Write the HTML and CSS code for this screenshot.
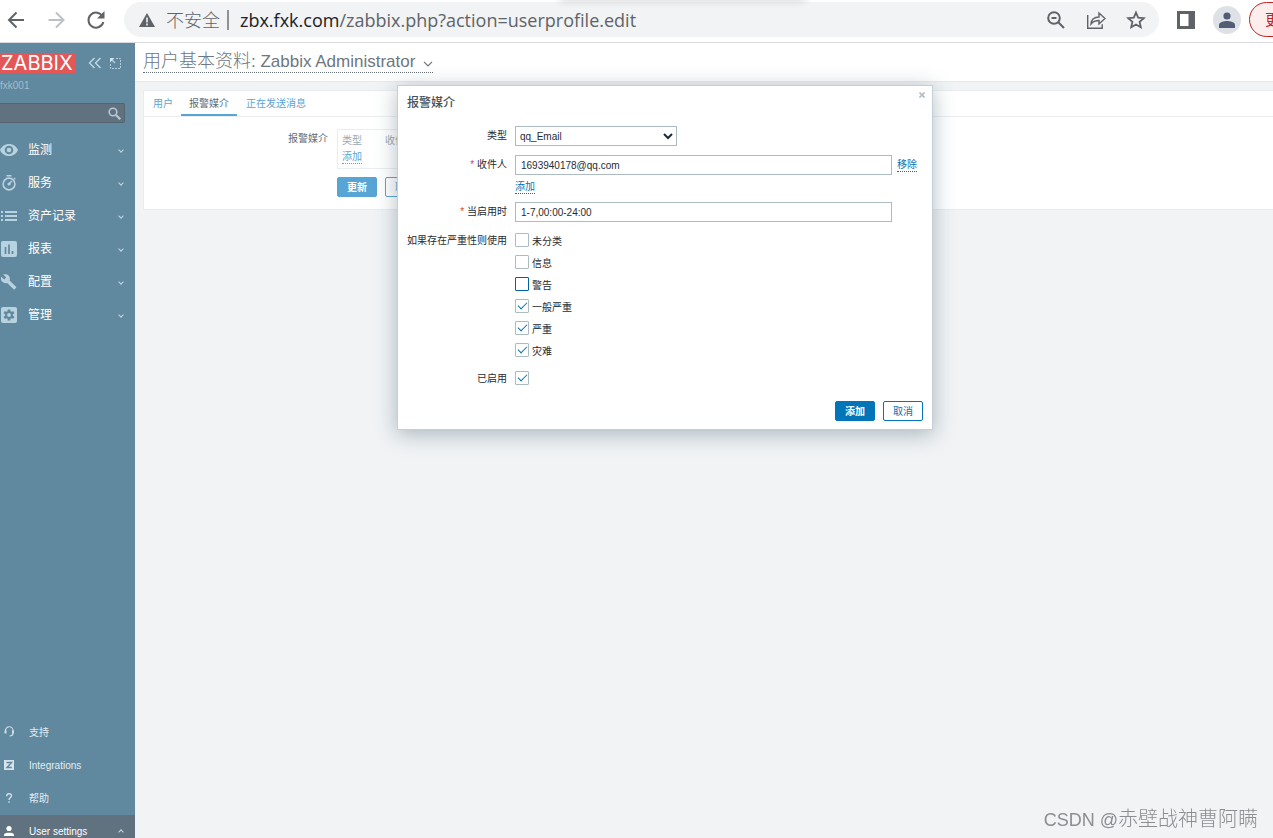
FILE: index.html
```html
<!DOCTYPE html>
<html lang="zh-CN">
<head>
<meta charset="utf-8">
<title>用户基本资料</title>
<link rel="stylesheet" href="styles.css">
</head>
<body>
<header class="browser">
  <button class="nav-btn" aria-label="Back"><svg width="20" height="20" viewBox="0 0 20 20" fill="none" stroke="#5f6368" stroke-width="2"><path d="M18 10H4M10.500 2.500L3 10l7.500 7.500"/></svg></button>
  <button class="nav-btn" aria-label="Forward"><svg width="20" height="20" viewBox="0 0 20 20" fill="none" stroke="#bdc1c6" stroke-width="2"><path d="M2.500 10H16.500M10 2.500l7.500 7.500-7.500 7.500"/></svg></button>
  <button class="nav-btn" aria-label="Reload"><svg width="20" height="20" viewBox="0 0 20 20" fill="none" stroke="#5f6368" stroke-width="2"><path d="M16.600 6.500A7.500 7.500 0 1 0 17.300 12"/><path d="M18.500 1v7.500H11z" fill="#5f6368" stroke="none"/></svg></button>
  <div class="omnibox">
    <svg width="16" height="16" viewBox="0 0 16 16"><path d="M8 1L16 15H0z" fill="#5f6368"/><path d="M8 5.500v5M8 11.500v2" stroke="#f1f3f4" stroke-width="1.600"/></svg>
    <span class="insecure">不安全</span>
    <span class="url"><b>zbx.fxk.com</b>/zabbix.php?action=userprofile.edit</span>
    <div class="omni-actions">
      <button class="icon-btn" aria-label="Zoom"><svg width="20" height="20" viewBox="0 0 20 20" fill="none" stroke="#5f6368" stroke-width="2"><circle cx="8" cy="8" r="5.800"/><path d="M12 12l6 6M5.500 8h5"/></svg></button>
      <button class="icon-btn" aria-label="Share"><svg width="20" height="20" viewBox="0 0 20 20" fill="none" stroke="#5f6368" stroke-width="1.400"><path d="M1.700 5v13.200h14.500v-4"/><path d="M5 14c.5-5 3.500-7 8-7V3l6 5.500-6 5.500v-3.500c-4 0-6 1-8 3.500z"/></svg></button>
      <button class="icon-btn" aria-label="Bookmark"><svg width="20" height="20" viewBox="0 0 20 20" fill="none" stroke="#5f6368" stroke-width="1.800"><path d="M10 2.600l2.200 5.100 5.600.5-4.200 3.700 1.200 5.400-4.800-2.800-4.800 2.800 1.200-5.400L2.200 8.200l5.600-.5z"/></svg></button>
    </div>
  </div>
  <button class="icon-btn panel-btn" aria-label="Side panel"><svg width="18" height="18" viewBox="0 0 18 18"><path d="M0 0h18v18H0zM3 3v12h8.500V3z" fill="#5f6368" fill-rule="evenodd"/></svg></button>
  <button class="avatar" aria-label="Profile"><svg width="16" height="16" viewBox="0 0 16 16" fill="#525d75"><circle cx="8" cy="4" r="3.600"/><path d="M0 16v-3c0-3 5-4 8-4s8 1 8 4v3z"/></svg></button>
  <button class="update">更新</button>
  <div class="tab-shadow"></div>
</header>

<div class="app">
  <aside class="sidebar">
    <div class="brand">
      <a class="logo" href="#">ZABBIX</a>
      <button class="side-btn" aria-label="Collapse"><svg width="14" height="12" viewBox="0 0 14 12" fill="none" stroke="#c3d8e4" stroke-width="1.400"><path d="M6.500 1l-5 5 5 5M12.500 1l-5 5 5 5"/></svg></button>
      <button class="side-btn" aria-label="Hide"><svg width="11" height="11" viewBox="0 0 11 11" fill="none" stroke="#b5cddb"><path d="M6 .5h4.500v10H.5V6" stroke-dasharray="2 1"/><path d="M1 1l4 4" stroke-width="1.500"/><path d="M0 0h4.500L0 4.500z" fill="#d5e5ee" stroke="none"/></svg></button>
    </div>
    <div class="server">fxk001</div>
    <form class="search">
      <input type="search" aria-label="Search">
      <button class="side-btn" type="button" aria-label="Search"><svg width="13" height="13" viewBox="0 0 13 13" fill="none" stroke="#b5c8d3"><circle cx="5" cy="5" r="3.800" stroke-width="1.600"/><path d="M8 8l4.300 4.300" stroke-width="2.200"/></svg></button>
    </form>
    <nav class="menu">
      <a href="#"><svg width="18" height="16" viewBox="0 0 18 16"><path d="M0 8c3.500-8 14.500-8 18 0-3.500 8-14.500 8-18 0z" fill="#b9d2e0"/><circle cx="9" cy="8" r="3.300" fill="#b9d2e0" stroke="#60889e" stroke-width="2"/></svg><span>监测</span><i></i></a>
      <a href="#"><svg width="18" height="16" viewBox="0 0 18 16" fill="none" stroke="#b9d2e0" stroke-width="1.600"><circle cx="9" cy="9" r="5.900"/><path d="M6.500.8h5M9 9l2.800-3M14 3l1.200 1.200"/><circle cx="9" cy="9" r=".8"/></svg><span>服务</span><i></i></a>
      <a href="#"><svg width="18" height="16" viewBox="0 0 18 16" stroke="#b9d2e0" stroke-width="2"><path d="M1 4h2M5 4h12M1 8h2M5 8h12M1 12h2M5 12h12"/></svg><span>资产记录</span><i></i></a>
      <a href="#"><svg width="18" height="16" viewBox="0 0 18 16"><rect x="1" width="16" height="16" rx="2" fill="#b9d2e0"/><path d="M5.500 6v7M9 3.500V13M12.500 10v3" stroke="#60889e" stroke-width="1.700"/></svg><span>报表</span><i></i></a>
      <a href="#"><svg width="18" height="16" viewBox="0 0 18 16"><path d="M16 12.700L9.600 6.400C10.200 4.700 9.800 2.800 8.500 1.500 7.100.1 5 0 3.300.6L6.200 3.500 4.200 5.600 1.300 2.700C.6 4.300 1 6.500 2.300 7.800c1.300 1.300 3.200 1.700 4.900 1.100l6.400 6.300c.3.300.7.300 1 0l1.500-1.500c.3-.3.300-.7-.1-1z" fill="#b9d2e0"/></svg><span>配置</span><i></i></a>
      <a href="#"><svg width="18" height="16" viewBox="0 0 18 16"><rect x="1" width="16" height="16" rx="2" fill="#b9d2e0"/><path d="M9 2.500v11M4.200 5.200l9.600 5.600M4.200 10.800l9.600-5.600" stroke="#60889e" stroke-width="2.700"/><circle cx="9" cy="8" r="3.900" fill="#60889e"/><circle cx="9" cy="8" r="1.900" fill="#b9d2e0"/></svg><span>管理</span><i></i></a>
    </nav>
    <nav class="menu menu-foot">
      <a href="#"><svg width="18" height="12" viewBox="0 0 18 12" fill="none" stroke="#cfdfe8" stroke-width="1.200"><path d="M5.500 6V4.500a3.500 3.500 0 0 1 7.500 0V7c0 2-1 3-3.500 3"/><path d="M5.500 4.500v3M13 4.500v3" stroke-width="2"/></svg><span>支持</span></a>
      <a href="#"><svg width="18" height="10" viewBox="0 0 18 10"><path d="M4 0h10v10H4z" fill="#d5e3eb"/><path d="M6.500 2.500h5L7 7.500h4.800" fill="none" stroke="#60889e" stroke-width="1.400"/></svg><span>Integrations</span></a>
      <a href="#"><svg width="18" height="10" viewBox="0 0 18 10" fill="none" stroke="#cfdfe8" stroke-width="1.400"><path d="M6.700 3.200C6.700 0 11.500 0 11.500 2.700 11.500 4.500 9 4.500 9 7M9 8.200v1.600"/></svg><span>帮助</span></a>
      <a class="current" href="#"><svg width="18" height="12" viewBox="0 0 18 12" fill="#fff"><circle cx="9" cy="3.500" r="2.600"/><path d="M4 11V9.500C4 7 14 7 14 9.500V11z"/></svg><span>User settings</span><i></i></a>
    </nav>
  </aside>

  <main class="main">
    <header class="page-head">
      <h1><button class="title-btn">用户基本资料<span class="latin">: Zabbix Administrator</span><svg width="10" height="6" viewBox="0 0 10 6" fill="none" stroke="#66757f" stroke-width="1.200"><path d="M1 .8l4 4 4-4"/></svg></button></h1>
    </header>
    <section class="card">
      <nav class="tabs">
        <a href="#">用户</a>
        <a class="active" href="#">报警媒介</a>
        <a href="#">正在发送消息</a>
      </nav>
      <div class="profile">
        <div class="profile-label">报警媒介</div>
        <div class="profile-body">
          <table class="media">
            <thead><tr><th>类型</th><th>收件人</th></tr></thead>
            <tbody><tr><td colspan="2"><a class="dotted" href="#">添加</a></td></tr></tbody>
          </table>
          <div class="actions">
            <button class="btn primary soft">更新</button>
            <button class="btn soft-line">取消</button>
          </div>
        </div>
      </div>
    </section>
  </main>
</div>

<div class="modal" role="dialog" aria-labelledby="dlg-title">
  <div class="modal-head">
    <h2 id="dlg-title">报警媒介</h2>
    <button class="close" aria-label="Close"><svg width="6" height="6" viewBox="0 0 6 6" stroke="#b3bfc6" stroke-width="1.700"><path d="M.5.5l5 5M5.500.5l-5 5"/></svg></button>
  </div>
  <form class="form">
    <label for="type">类型</label>
    <div class="field"><select id="type"><option>qq_Email</option></select></div>
    <label class="req" for="sendto">收件人</label>
    <div class="field">
      <div class="send-row"><input class="text" id="sendto" type="text" value="1693940178@qq.com"><a class="dotted" href="#">移除</a></div>
      <div class="add-row"><a class="dotted" href="#">添加</a></div>
    </div>
    <label class="req" for="period">当启用时</label>
    <div class="field"><input class="text" id="period" type="text" value="1-7,00:00-24:00"></div>
    <span class="form-label">如果存在严重性则使用</span>
    <div class="field checks">
      <label><input type="checkbox">未分类</label>
      <label><input type="checkbox">信息</label>
      <label><input class="focused" type="checkbox">警告</label>
      <label><input type="checkbox" checked>一般严重</label>
      <label><input type="checkbox" checked>严重</label>
      <label><input type="checkbox" checked>灾难</label>
    </div>
    <label for="enabled">已启用</label>
    <div class="field enabled"><input id="enabled" type="checkbox" checked></div>
  </form>
  <div class="modal-foot">
    <button class="btn primary">添加</button>
    <button class="btn">取消</button>
  </div>
</div>
<div class="watermark"><span class="handle">CSDN @</span>赤壁战神曹阿瞒</div>
</body>
</html>
```
FILE: styles.css
```css
* { box-sizing: border-box; }
body {
  margin: 0;
  height: 100vh;
  overflow: hidden;
  display: flex;
  flex-direction: column;
  font: 10px/14px "Liberation Sans", "Noto Sans CJK SC", sans-serif;
  color: #1f2c33;
  background: #f1f3f5;
}
button { font: inherit; color: inherit; padding: 0; border: 0; background: none; }
a { color: #0275b8; text-decoration: none; }
svg { display: block; flex: none; }
h1, h2 { margin: 0; font-weight: normal; }

/* Browser toolbar */
.browser {
  position: relative;
  flex: none;
  display: flex;
  align-items: center;
  height: 43px;
  padding: 0 0 3px 6px;
  background: #fff;
  border-bottom: 1px solid #d9dbde;
  overflow: hidden;
}
.nav-btn { flex: none; width: 20px; margin-right: 20px; }
.nav-btn:nth-of-type(3) { margin-right: 18px; }
.omnibox {
  flex: 1;
  display: flex;
  align-items: center;
  height: 35px;
  padding: 0 13px 0 15px;
  border-radius: 18px;
  background: #f1f3f4;
  font: 18px/24px "Noto Sans", "Noto Sans CJK SC", sans-serif;
  color: #5f6368;
  white-space: nowrap;
}
.insecure {
  margin-left: 11px;
  padding-right: 7px;
  line-height: 20px;
  border-right: 2px solid #8e9296;
  font-weight: 300;
}
.url { margin-left: 11px; font-family: "Open Sans", "Noto Sans", sans-serif; }
.url b { font-weight: normal; color: #202124; }
.omni-actions { display: flex; gap: 20px; margin-left: auto; }
.icon-btn { flex: none; width: 20px; }
.panel-btn { margin-left: 18px; }
.avatar {
  flex: none;
  display: grid;
  place-items: center;
  width: 28px;
  height: 28px;
  margin-left: 16px;
  border-radius: 50%;
  background: #dee1e6;
}
.update {
  flex: none;
  width: 64px;
  height: 35px;
  margin: 0 -40px 0 8px;
  padding-left: 15px;
  border: 1px solid #c5221f;
  border-radius: 18px;
  background: #fbeeec;
  color: #c5221f;
  font-size: 15px;
  text-align: left;
}
.tab-shadow {
  position: absolute;
  top: -8px;
  left: 560px;
  width: 246px;
  height: 8px;
  box-shadow: 0 0 8px #0003;
}

/* Sidebar */
.app { flex: 1; display: flex; min-height: 0; }
.sidebar {
  flex: none;
  display: flex;
  flex-direction: column;
  width: 135px;
  padding-top: 10px;
  background: #60889e;
  overflow: hidden;
}
.side-btn { flex: none; }
.brand { display: flex; align-items: center; height: 20px; }
.logo {
  width: 75px;
  margin-right: 13px;
  padding-left: 1px;
  background: #e35757;
  color: #fff;
  font: 20px/20px "Inter", sans-serif;
}
.brand .side-btn + .side-btn { margin-left: 8px; }
.server { margin-top: 6px; color: #a3bdcb; }
.search {
  display: flex;
  align-items: center;
  height: 20px;
  margin: 10px 10px 10px 0;
  padding-right: 3px;
  border: 1px solid #55646f;
  border-left: 0;
  border-radius: 0 2px 2px 0;
  background: #60727f;
}
.search input { flex: 1; min-width: 0; border: 0; background: none; color: #fff; }
.menu a {
  display: flex;
  align-items: center;
  height: 33px;
  padding-right: 11px;
  color: #fff;
  font-size: 12px;
}
.menu span { flex: 1; margin-left: 10px; }
.menu i {
  width: 4px;
  height: 4px;
  margin-right: 1px;
  border: solid #c3d8e4;
  border-width: 0 1px 1px 0;
  transform: rotate(45deg);
}
.menu-foot { margin: auto 0 -10px; }
.menu-foot a { font-size: 10px; color: #e3edf3; }
.menu-foot svg { margin-bottom: 2px; }
.menu-foot span { margin-left: 11px; }
.menu-foot .current { background: #60727f; color: #fff; }
.current i { transform: rotate(225deg); }

/* Page */
.main { flex: 1; min-width: 0; }
.page-head {
  height: 39px;
  padding: 8px 8px 0;
  background: #fff;
  border-bottom: 1px solid #e6eaec;
}
.title-btn {
  display: flex;
  align-items: baseline;
  border-bottom: 1px dotted #66727a;
  font-size: 18px;
  line-height: 21px;
  font-weight: 300;
  color: #6d7780;
}
.latin { font-size: 17px; }
.title-btn svg { align-self: center; margin: 4px 0 0 8px; }
.card {
  margin: 8px 0 0 8px;
  padding-bottom: 12px;
  background: #fff;
  border: 1px solid #e8ecee;
  border-right: 0;
}
.tabs { display: flex; padding-left: 1px; border-bottom: 1px solid #ebeef0; }
.tabs a { padding: 6px 8px 3px; border-bottom: 2px solid transparent; color: #57a5d4; }
.tabs a:last-child { padding-left: 9px; }
.tabs .active { color: #5f6b73; border-color: #57a5d4; }
.profile { display: flex; gap: 9px; padding-top: 12px; }
.profile-label { width: 184px; padding-top: 3px; text-align: right; color: #5f6b73; }
.profile-body { flex: 1; }
.media {
  width: 520px;
  height: 40px;
  padding: 4px 4px 3px;
  border: 1px solid #ebeef0;
  border-spacing: 0;
}
.media th { padding: 0; font-weight: normal; text-align: left; color: #9aa9b2; }
.media th:first-child { width: 43px; }
.media td { padding: 0; }
.media .dotted { color: #57a5d4; }
.actions { display: flex; gap: 8px; padding-top: 8px; }
.dotted { display: inline-block; line-height: 13px; border-bottom: 1px dotted currentColor; }
.btn {
  min-width: 40px;
  height: 20px;
  padding: 1px 9px 0;
  border: 1px solid #0275b8;
  border-radius: 2px;
  background: #fff;
  color: #0275b8;
}
.primary { background: #0275b8; color: #fff; font-weight: bold; }
.soft { background: #57a5d4; border-color: #57a5d4; }
.soft-line { color: #57a5d4; border-color: #57a5d4; }

/* Dialog */
.modal {
  position: absolute;
  top: 85px;
  left: 397px;
  width: 536px;
  padding: 0 9px 8px;
  background: #fff;
  border: 1px solid #c5d0d6;
  box-shadow: 0 4px 20px #3c5a6a66;
}
.modal-head { display: flex; justify-content: space-between; align-items: flex-start; padding-bottom: 15px; }
.modal h2 { padding-top: 9px; font-size: 12px; line-height: 16px; font-weight: 500; color: #3c5563; }
.close { margin: 6px -2px 0 0; }
.form { display: grid; grid-template-columns: auto 1fr; gap: 9px 8px; }
.form > label, .form-label { padding-top: 3px; text-align: right; }
.req::before { content: "* "; color: #e33734; }
.form select, .text {
  display: block;
  height: 20px;
  border: 1px solid #acbbc2;
  border-radius: 0;
  background: #fff;
  color: #1f2c33;
  font: inherit;
}
.form select { width: 162px; padding: 0; }
.text { width: 377px; padding: 0 5px; }
.send-row { display: flex; align-items: center; gap: 5px; }
.add-row { padding: 5px 0 0; height: 18px; }
.checks { display: flex; flex-direction: column; gap: 4px; padding-top: 2px; }
.checks label { display: flex; align-items: flex-start; gap: 3px; line-height: 18px; }
.form input[type="checkbox"] {
  appearance: none;
  flex: none;
  display: grid;
  place-items: center;
  width: 14px;
  height: 14px;
  margin: 0;
  border: 1px solid #acbbc2;
  border-radius: 1px;
  background: #fff;
}
.form input:checked::after {
  content: "";
  width: 8px;
  height: 4px;
  margin-bottom: 4px;
  border: solid #0275b8;
  border-width: 0 0 1px 1px;
  transform: rotate(-45deg);
}
.form input.focused { border-color: #0262a0; }
.form > label:last-of-type { padding-top: 2px; }
.enabled { padding-top: 1px; }
.modal-foot { display: flex; justify-content: flex-end; gap: 8px; padding-top: 15px; }

.watermark {
  position: fixed;
  right: 15px;
  bottom: 6px;
  font-size: 20px;
  line-height: 24px;
  font-weight: 300;
  color: #8b8e91;
}
.handle { font-size: 18px; }
```
